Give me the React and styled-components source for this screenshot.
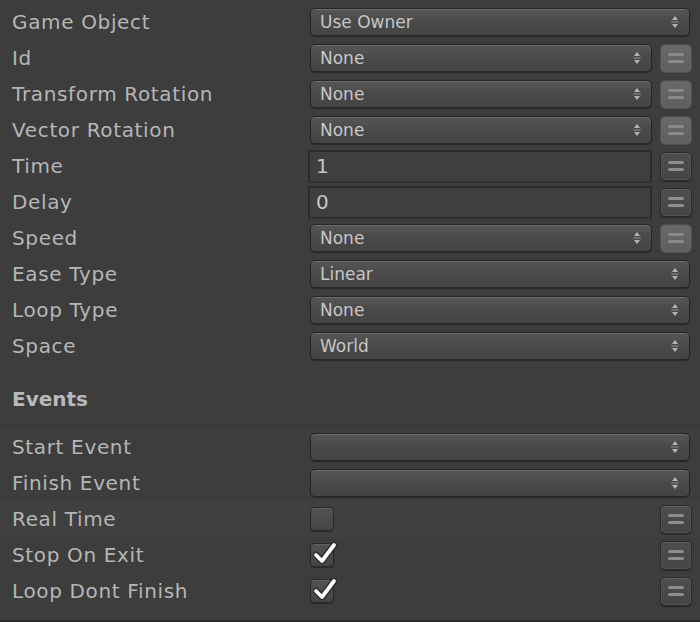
import React from "react";
import styled, { createGlobalStyle } from "styled-components";

const GlobalStyle = createGlobalStyle`
  html, body {
    margin: 0;
    padding: 0;
    background: #3d3d3d;
  }
  * {
    box-sizing: border-box;
  }
`;

const Panel = styled.div`
  width: 700px;
  height: 622px;
  background: #3d3d3d;
  font-family: "DejaVu Sans", "Liberation Sans", sans-serif;
  padding-top: 4px;
  border-bottom: 2px solid #2a2a2a;
  display: flex;
  flex-direction: column;
  overflow: hidden;
`;

const Row = styled.div`
  display: grid;
  grid-template-columns: 310px 1fr;
  align-items: center;
  height: 36px;
  background: ${(p) => (p.$highlight ? "#404040" : "transparent")};
`;

const Label = styled.div`
  padding-left: 12px;
  font-size: 20px;
  letter-spacing: 0.65px;
  color: #b6b6b6;
  white-space: nowrap;
`;

const Controls = styled.div`
  display: flex;
  align-items: center;
  gap: 8px;
  padding-right: 8px;
  height: 100%;
`;

const Dropdown = styled.div`
  flex: 1;
  height: 28px;
  margin-right: ${(p) => (p.$full ? "2px" : "0")};
  display: flex;
  align-items: center;
  justify-content: space-between;
  padding: 0 10px 0 9px;
  border: 1px solid #262626;
  border-radius: 5px;
  background: linear-gradient(#575757, #4a4a4a 45%, #444444);
  box-shadow: inset 0 1px 0 #6b6b6b, 0 1px 1px rgba(0, 0, 0, 0.35);
  color: #c6c6c6;
  font-size: 17px;
`;

const TextField = styled.div`
  flex: 1;
  height: 33px;
  margin-left: -2px;
  display: flex;
  align-items: center;
  padding-left: 6px;
  border: 2px solid #2b2b2b;
  border-bottom-color: #303030;
  background: #3f3f3f;
  color: #c6c6c6;
  font-size: 20px;
`;

const Spacer = styled.div`
  flex: 1;
`;

const EqualButton = styled.div`
  width: 32px;
  height: 29px;
  flex: none;
  display: flex;
  flex-direction: column;
  align-items: center;
  justify-content: center;
  gap: 4px;
  border-radius: 5px;
  border: 1px solid ${(p) => (p.$active ? "#505050" : "#2a2a2a")};
  background: ${(p) =>
    p.$active
      ? "linear-gradient(#6a6a6a, #5e5e5e)"
      : "linear-gradient(#4e4e4e, #454545)"};
  box-shadow: ${(p) =>
    p.$active
      ? "inset 0 0 0 1px #646464"
      : "inset 0 1px 0 #5e5e5e, inset 0 0 0 1px #525252, 0 1px 1px rgba(0,0,0,0.35)"};
`;

const Bar = styled.span`
  display: block;
  width: 16px;
  height: 3px;
  border-radius: 2px;
  background: ${(p) => (p.$active ? "#898989" : "#8e8e8e")};
`;

const CheckBox = styled.div`
  position: relative;
  width: 24px;
  height: 24px;
  flex: none;
  border-radius: 4px;
  border: 1px solid #282828;
  background: linear-gradient(#525252, #454545);
  box-shadow: inset 0 1px 0 #626262, 0 1px 1px rgba(0, 0, 0, 0.3);
`;

const CheckMark = styled.svg`
  position: absolute;
  left: 2px;
  top: -2px;
  width: 24px;
  height: 24px;
`;

const SectionHeader = styled.div`
  height: 62px;
  display: flex;
  align-items: center;
  padding: 8px 0 0 12px;
  font-size: 20px;
  font-weight: bold;
  color: #b9b9b9;
  border-bottom: 1px solid #333333;
  margin-bottom: 3px;
`;

const Arrows = () => (
  <svg width="8" height="14" viewBox="0 0 8 14">
    <path d="M4 1 L7 5 L1 5 Z" fill="#b4b4b4" />
    <rect x="0" y="6.5" width="8" height="1" fill="#8e8e8e" />
    <path d="M4 13 L7 9 L1 9 Z" fill="#b4b4b4" />
  </svg>
);

const Equal = ({ active }) => (
  <EqualButton $active={active}>
    <Bar $active={active} />
    <Bar $active={active} />
  </EqualButton>
);

const Check = ({ checked }) => (
  <CheckBox>
    {checked && (
      <CheckMark viewBox="0 0 24 24">
        <path
          d="M3 13 L9 19 L21 3"
          fill="none"
          stroke="#2a2a2a"
          strokeWidth="6.5"
          strokeLinecap="round"
          strokeLinejoin="round"
        />
        <path
          d="M3 13 L9 19 L21 3"
          fill="none"
          stroke="#ffffff"
          strokeWidth="3.8"
          strokeLinecap="round"
          strokeLinejoin="round"
        />
      </CheckMark>
    )}
  </CheckBox>
);

const fields = [
  { label: "Game Object", type: "select", value: "Use Owner" },
  { label: "Id", type: "select", value: "None", button: "active" },
  { label: "Transform Rotation", type: "select", value: "None", button: "active" },
  { label: "Vector Rotation", type: "select", value: "None", button: "active" },
  { label: "Time", type: "text", value: "1", button: "normal" },
  { label: "Delay", type: "text", value: "0", button: "normal" },
  { label: "Speed", type: "select", value: "None", button: "active" },
  { label: "Ease Type", type: "select", value: "Linear" },
  { label: "Loop Type", type: "select", value: "None" },
  { label: "Space", type: "select", value: "World" },
];

const events = [
  { label: "Start Event", type: "select", value: "" },
  { label: "Finish Event", type: "select", value: "" },
  { label: "Real Time", type: "check", value: false, button: "normal", highlight: true },
  { label: "Stop On Exit", type: "check", value: true, button: "normal" },
  { label: "Loop Dont Finish", type: "check", value: true, button: "normal" },
];

const FieldRow = ({ field }) => (
  <Row $highlight={field.highlight}>
    <Label>{field.label}</Label>
    <Controls>
      {field.type === "select" && (
        <Dropdown $full={!field.button}>
          <span>{field.value}</span>
          <Arrows />
        </Dropdown>
      )}
      {field.type === "text" && <TextField>{field.value}</TextField>}
      {field.type === "check" && (
        <>
          <Check checked={field.value} />
          <Spacer />
        </>
      )}
      {field.button && <Equal active={field.button === "active"} />}
    </Controls>
  </Row>
);

export default function App() {
  return (
    <>
      <GlobalStyle />
      <Panel>
        {fields.map((f) => (
          <FieldRow key={f.label} field={f} />
        ))}
        <SectionHeader>Events</SectionHeader>
        {events.map((f) => (
          <FieldRow key={f.label} field={f} />
        ))}
      </Panel>
    </>
  );
}
